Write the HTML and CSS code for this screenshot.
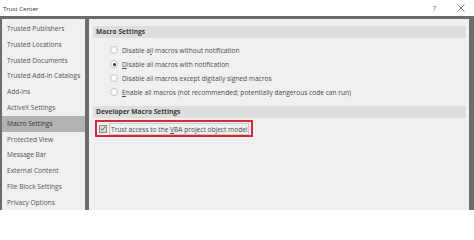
FILE: index.html
```html
<!DOCTYPE html>
<html>
<head>
<meta charset="utf-8">
<link rel="stylesheet" href="styles.css">
</head>
<body>
<div class="window">
  <div class="titlebar">
    <span class="title">Trust Center</span>
    <div class="controls">
      <span class="help">?</span>
      <svg class="close" width="8" height="8" viewBox="0 0 8 8"><path d="M0.5 0.5 L7.5 7.5 M7.5 0.5 L0.5 7.5" stroke="#666" stroke-width="0.9" fill="none"/></svg>
    </div>
  </div>
  <div class="frame">
    <ul class="sidebar">
      <li>Trusted Publishers</li>
      <li>Trusted Locations</li>
      <li>Trusted Documents</li>
      <li>Trusted Add-in Catalogs</li>
      <li>Add-ins</li>
      <li>ActiveX Settings</li>
      <li class="active">Macro Settings</li>
      <li>Protected View</li>
      <li>Message Bar</li>
      <li>External Content</li>
      <li>File Block Settings</li>
      <li>Privacy Options</li>
    </ul>
    <div class="main">
      <div class="section-head">Macro Settings</div>
      <div class="options">
        <label class="opt"><span class="radio"></span><span>Disable a<u>l</u>l macros without notification</span></label>
        <label class="opt"><span class="radio on"></span><span><u>D</u>isable all macros with notification</span></label>
        <label class="opt"><span class="radio"></span><span>Disable all macros except digitally signed macros</span></label>
        <label class="opt"><span class="radio"></span><span><u>E</u>nable all macros (not recommended; potentially dangerous code can run)</span></label>
      </div>
      <div class="section-head dev">Developer Macro Settings</div>
      <div class="check-row">
        <div class="highlight">
          <span class="checkbox">
            <svg width="7" height="7" viewBox="0 0 7 7"><path d="M1 3.6 L2.8 5.4 L6 1.4" stroke="#4a5a4a" stroke-width="1.1" fill="none"/></svg>
          </span>
          <span class="focus">Trust access to the <u>V</u>BA project object model</span>
        </div>
      </div>
    </div>
  </div>
</div>
</body>
</html>
```
FILE: styles.css
```css
* { box-sizing: border-box; }
html, body {
  margin: 0;
  padding: 0;
  width: 474px;
  height: 210px;
  overflow: hidden;
  background: #ffffff;
  font-family: "Open Sans", "Noto Sans", sans-serif;
  font-size: 6.6px;
  color: #4a4a4a;
}
.window {
  display: flex;
  flex-direction: column;
  height: 210px;
}
.titlebar {
  height: 16px;
  flex: none;
  display: flex;
  align-items: center;
  justify-content: space-between;
  padding: 0 9px 0 3px;
  background: #ffffff;
}
.title {
  font-size: 6.1px;
  color: #333;
}
.controls {
  display: flex;
  align-items: center;
  gap: 21px;
}
.help {
  font-size: 7px;
  color: #666;
}
.close { display: block; }
.frame {
  flex: 1;
  display: flex;
  gap: 4px;
  background: #6c6c6c;
  padding: 3px 5px 0 2px;
}
.sidebar {
  list-style: none;
  margin: 0;
  padding: 2px 0 0 0;
  width: 83px;
  background: #f0f0f0;
}
.sidebar li {
  height: 15.8px;
  line-height: 15.8px;
  padding-left: 5px;
  color: #555;
  white-space: nowrap;
}
.sidebar li.active {
  background: #b2b2b2;
  color: #333;
}
.main {
  flex: 1;
  background: #f0f0f0;
  padding: 7px 3px 0 4px;
}
.section-head {
  height: 12px;
  line-height: 12px;
  background: #dedede;
  font-weight: bold;
  color: #3c3c3c;
  padding-left: 3px;
}
.section-head.dev {
  margin-top: 4px;
}
.options {
  padding: 5px 0 3px 17px;
  display: flex;
  flex-direction: column;
}
.opt {
  height: 14px;
  display: flex;
  align-items: center;
  gap: 4px;
  color: #4a4a4a;
  white-space: nowrap;
}
.radio {
  width: 8px;
  height: 8px;
  border-radius: 50%;
  border: 1px solid #c4c4c4;
  background: #fbfbfb;
  display: flex;
  align-items: center;
  justify-content: center;
}
.radio.on::after {
  content: "";
  width: 3px;
  height: 3px;
  border-radius: 50%;
  background: #333;
}
.check-row {
  padding: 2px 0 0 2px;
}
.highlight {
  display: inline-flex;
  align-items: center;
  gap: 2px;
  height: 17px;
  width: 158px;
  border: 2px solid #d42a35;
  padding: 0 2px 0 2px;
}
.checkbox {
  width: 8px;
  height: 8px;
  border: 1px solid #8a8a8a;
  background: #d8dcd8;
  display: flex;
  align-items: center;
  justify-content: center;
}
.checkbox svg { display: block; }
.focus {
  flex: 1;
  height: 12px;
  line-height: 11px;
  border: 1px solid #c8c8c8;
  padding-left: 1px;
  color: #4a4a4a;
  white-space: nowrap;
}
u { text-decoration-thickness: 0.5px; text-underline-offset: 1px; }
```
